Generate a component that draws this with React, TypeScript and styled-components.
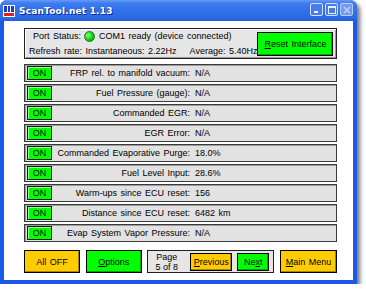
import React from 'react';
import styled, { createGlobalStyle } from 'styled-components';

interface Sensor {
  label: string;
  value: string;
}

const sensors: Sensor[] = [
  { label: 'FRP rel. to manifold vacuum', value: 'N/A' },
  { label: 'Fuel Pressure (gauge)', value: 'N/A' },
  { label: 'Commanded EGR', value: 'N/A' },
  { label: 'EGR Error', value: 'N/A' },
  { label: 'Commanded Evaporative Purge', value: '18.0%' },
  { label: 'Fuel Level Input', value: '28.6%' },
  { label: 'Warm-ups since ECU reset', value: '156' },
  { label: 'Distance since ECU reset', value: '6482 km' },
  { label: 'Evap System Vapor Pressure', value: 'N/A' },
];

const GlobalStyle = createGlobalStyle`
  html, body {
    margin: 0;
    padding: 0;
    background: #ffffff;
  }
  body {
    font-family: "Liberation Sans", Arial, sans-serif;
    font-size: 9px;
    color: #000;
  }
`;

const App: React.FC = () => {
  return (
    <>
      <GlobalStyle />
      <Window>
        <TitleBar>
          <AppIcon viewBox="0 0 12 12">
            <rect x="0" y="0" width="12" height="12" fill="#ffffff" />
            <rect x="1" y="1" width="3" height="6" fill="#1d3fb8" />
            <rect x="5" y="1" width="2" height="6" fill="#1d3fb8" />
            <rect x="8" y="1" width="3" height="6" fill="#1d3fb8" />
            <rect x="1" y="8" width="10" height="3" fill="#e02020" />
          </AppIcon>
          <Title>ScanTool.net 1.13</Title>
          <Caption>
            <CapButton>
              <svg width="8" height="8" viewBox="0 0 8 8">
                <rect x="1" y="5" width="4" height="2" fill="#fff" />
              </svg>
            </CapButton>
            <CapButton>
              <svg width="8" height="8" viewBox="0 0 8 8">
                <rect x="0.5" y="0.5" width="7" height="7" fill="none" stroke="#fff" />
                <rect x="0.5" y="0.5" width="7" height="1.5" fill="#fff" />
              </svg>
            </CapButton>
            <CapButton disabled>
              <svg width="8" height="8" viewBox="0 0 8 8">
                <path d="M1 1 L7 7 M7 1 L1 7" stroke="#e8eefc" strokeWidth="1.6" />
              </svg>
            </CapButton>
          </Caption>
        </TitleBar>
        <Client>
          <StatusPanel>
            <StatusText>
              <StatusLine $indent={4}>
                Port Status:
                <Led />
                COM1 ready (device connected)
              </StatusLine>
              <StatusLine>
                <span>Refresh rate: Instantaneous: 2.22Hz</span>
                <Average>Average: 5.40Hz</Average>
              </StatusLine>
            </StatusText>
            <ActionButton $color="green" $w={76} $h={24}>
              <u>R</u>eset Interface
            </ActionButton>
          </StatusPanel>

          <SensorList>
            {sensors.map((s) => (
              <SensorRow key={s.label}>
                <OnButton>ON</OnButton>
                <SensorLabel>{s.label}:</SensorLabel>
                <SensorValue>{s.value}</SensorValue>
              </SensorRow>
            ))}
          </SensorList>

          <Footer>
            <ActionButton $color="yellow" $w={56} $h={23}>
              All OFF
            </ActionButton>
            <ActionButton $color="green" $w={56} $h={23}>
              <u>O</u>ptions
            </ActionButton>
            <PageBox>
              <PageLabel>
                Page
                <br />5 of 8
              </PageLabel>
              <ActionButton $color="yellow" $w={42} $h={18}>
                <u>P</u>revious
              </ActionButton>
              <ActionButton $color="green" $w={32} $h={18}>
                Ne<u>x</u>t
              </ActionButton>
            </PageBox>
            <ActionButton $color="yellow" $w={57} $h={23}>
              <u>M</u>ain Menu
            </ActionButton>
          </Footer>
        </Client>
      </Window>
    </>
  );
};

const Window = styled.div`
  width: 357px;
  height: 284px;
  display: flex;
  flex-direction: column;
  background: #1b5ae8;
  border-radius: 7px 7px 0 0;
  box-shadow: 3px 3px 4px rgba(0, 0, 0, 0.55);
  box-sizing: border-box;
`;

const TitleBar = styled.div`
  height: 21px;
  flex: none;
  display: flex;
  align-items: center;
  padding: 0 4px 0 3px;
  border-radius: 7px 7px 0 0;
  background: linear-gradient(
    180deg,
    #6a9bf7 0%,
    #3d7cf0 15%,
    #3170e9 50%,
    #2d6be4 85%,
    #245bd8 100%
  );
`;

const AppIcon = styled.svg`
  width: 12px;
  height: 12px;
  flex: none;
`;

const Title = styled.div`
  flex: 1;
  margin-left: 4px;
  color: #fff;
  font-family: "DejaVu Sans", Verdana, sans-serif;
  font-weight: bold;
  font-size: 9px;
  letter-spacing: 0.2px;
  text-shadow: 1px 1px 0 #0a2a90;
`;

const Caption = styled.div`
  display: flex;
  gap: 2px;
  margin-top: -2px;
`;

const CapButton = styled.div<{ disabled?: boolean }>`
  width: 11px;
  height: 11px;
  display: flex;
  align-items: center;
  justify-content: center;
  border: 1px solid #e6edfc;
  border-radius: 2px;
  background: ${(p) => (p.disabled ? '#8aa8ec' : '#4a7eec')};
  opacity: ${(p) => (p.disabled ? 0.75 : 0.9)};
`;

const Client = styled.div`
  flex: 1;
  margin: 0 4px 4px 4px;
  background: #fff;
  display: flex;
  flex-direction: column;
  padding: 7px 16px 0 20px;
`;

const StatusPanel = styled.div`
  height: 31px;
  box-sizing: border-box;
  display: flex;
  align-items: center;
  justify-content: space-between;
  padding: 0 4px 0 4px;
  background: #e6e6e6;
  border: 1px solid #202020;
  box-shadow: inset 1px 1px 0 #ffffff, inset -1px -1px 0 #9a9a9a;
`;

const StatusText = styled.div`
  display: flex;
  flex-direction: column;
  gap: 3px;
`;

const StatusLine = styled.div<{ $indent?: number }>`
  display: flex;
  align-items: center;
  height: 12px;
  padding-left: ${(p) => p.$indent || 0}px;
  white-space: nowrap;
  word-spacing: 1px;
`;

const Average = styled.span`
  margin-left: 13px;
`;

const Led = styled.span`
  width: 9px;
  height: 9px;
  border-radius: 50%;
  margin: 0 4px 0 3px;
  background: radial-gradient(circle at 35% 35%, #7dff7d, #00d000 60%, #008800);
  border: 1px solid #2a6a2a;
`;

const ActionButton = styled.div<{ $color: 'green' | 'yellow'; $w: number; $h: number }>`
  width: ${(p) => p.$w}px;
  height: ${(p) => p.$h}px;
  box-sizing: border-box;
  flex: none;
  display: flex;
  align-items: center;
  justify-content: center;
  white-space: nowrap;
  word-spacing: 1px;
  background: ${(p) => (p.$color === 'green' ? '#00ff00' : '#ffcc00')};
  border: 1px solid #000;
  box-shadow: inset -1px -1px 0 rgba(0, 0, 0, 0.35);
  u {
    text-decoration: underline;
  }
`;

const SensorList = styled.div`
  display: flex;
  flex-direction: column;
  gap: 2px;
  margin-top: 5px;
`;

const SensorRow = styled.div`
  height: 18px;
  box-sizing: border-box;
  display: flex;
  align-items: center;
  padding-left: 2px;
  background: #e2e2e2;
  border: 1px solid #3a3a3a;
  box-shadow: inset 1px 1px 0 #9c9c9c;
`;

const OnButton = styled.div`
  width: 25px;
  height: 14px;
  box-sizing: border-box;
  flex: none;
  display: flex;
  align-items: center;
  justify-content: center;
  background: #00ff00;
  border: 1px solid #1a1a1a;
  box-shadow: inset 1px 1px 0 #8dff8d;
`;

const SensorLabel = styled.div`
  width: 138px;
  flex: none;
  text-align: right;
  white-space: nowrap;
  word-spacing: 1px;
`;

const SensorValue = styled.div`
  margin-left: 5px;
  white-space: nowrap;
  word-spacing: 1px;
`;

const Footer = styled.div`
  display: flex;
  justify-content: space-between;
  align-items: center;
  margin-top: 8px;
`;

const PageBox = styled.div`
  width: 127px;
  height: 23px;
  box-sizing: border-box;
  flex: none;
  display: flex;
  align-items: center;
  gap: 5px;
  padding-right: 4px;
  background: #e6e6e6;
  border: 1px solid #202020;
`;

const PageLabel = styled.div`
  flex: 1;
  text-align: center;
  line-height: 10px;
`;

export default App;
